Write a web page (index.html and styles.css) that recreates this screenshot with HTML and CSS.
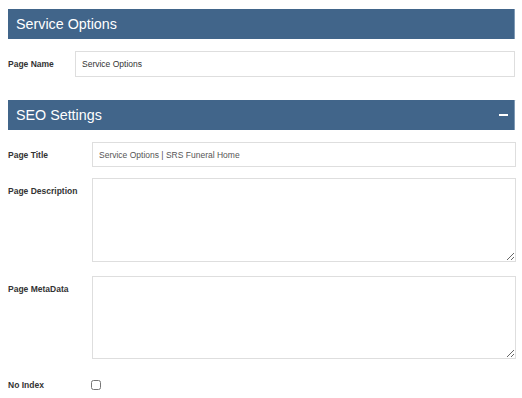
FILE: index.html
```html
<!DOCTYPE html>
<html>
<head>
<meta charset="utf-8">
<link rel="stylesheet" href="styles.css">
</head>
<body>
<div class="page">
  <section class="panel">
    <div class="panel-head"><span class="panel-title">Service Options</span></div>
    <div class="row row-name">
      <label class="lbl lbl-name">Page Name</label>
      <input class="field field-name" type="text" value="Service Options">
    </div>
  </section>
  <section class="panel panel-seo">
    <div class="panel-head"><span class="panel-title">SEO Settings</span><span class="collapse"></span></div>
    <div class="row row-title">
      <label class="lbl">Page Title</label>
      <input class="field field-title" type="text" value="Service Options | SRS Funeral Home">
    </div>
    <div class="row row-desc">
      <label class="lbl lbl-area">Page Description</label>
      <textarea class="field area area-desc"></textarea>
    </div>
    <div class="row row-meta">
      <label class="lbl lbl-area2">Page MetaData</label>
      <textarea class="field area area-meta"></textarea>
    </div>
    <div class="row row-check">
      <label class="lbl lbl-check">No Index</label>
      <input class="check" type="checkbox">
    </div>
  </section>
</div>
</body>
</html>
```
FILE: styles.css
```css
* { box-sizing: border-box; }
html, body { margin: 0; padding: 0; background: #fff; }
body { font-family: "Liberation Sans", Arial, sans-serif; color: #333; }
.page { padding: 9px 6px 0 8px; width: 522px; }
.panel-head {
  height: 30px;
  background: #41658a;
  border-right: 1px solid #7f9ab5;
  display: flex;
  align-items: center;
  justify-content: space-between;
  padding: 0 6px 1px 8px;
  width: 507px;
}
.panel-title { color: #fff; font-size: 14.3px; }
.collapse { width: 9px; height: 2px; background: #fff; margin-top: 1px; }
.row { display: flex; align-items: flex-start; }
.row-name { margin-top: 12px; width: 507px; }
.lbl { font-weight: bold; font-size: 8.5px; color: #333; }
.lbl-name { width: 67px; padding-top: 8px; }
.row .lbl { flex: none; }
.row-title .lbl, .row-desc .lbl, .row-meta .lbl, .row-check .lbl { width: 84px; }
.field {
  border: 1px solid #dedede;
  background: #fff;
  font-family: "Liberation Sans", Arial, sans-serif;
  font-size: 8.5px;
  color: #333;
  padding: 0 0 0 6px;
  margin: 0;
  outline: none;
  border-radius: 0;
}
.field-name { flex: 1; height: 26px; }
.panel-seo { margin-top: 23px; border-top: 1px solid #f0f0f0; padding-top: 0; }
.panel-seo .panel-head { margin-top: -1px; }
.row-title { margin-top: 12px; }
.row-title .lbl { padding-top: 8px; }
.field-title { width: 424px; height: 25px; color: #555; }
.row-desc { margin-top: 11px; }
.row-desc .lbl { padding-top: 8px; }
.area { width: 425px; resize: vertical; display: block; }
.area-desc { height: 84px; }
.row-meta { margin-top: 14px; }
.row-meta .lbl { padding-top: 8px; }
.area-meta { height: 83px; }
.row-check { margin-top: 21px; align-items: center; }
.lbl-check { padding-top: 0; }
.check { width: 10px; height: 10px; margin: 0 0 0 -1px; }
```
